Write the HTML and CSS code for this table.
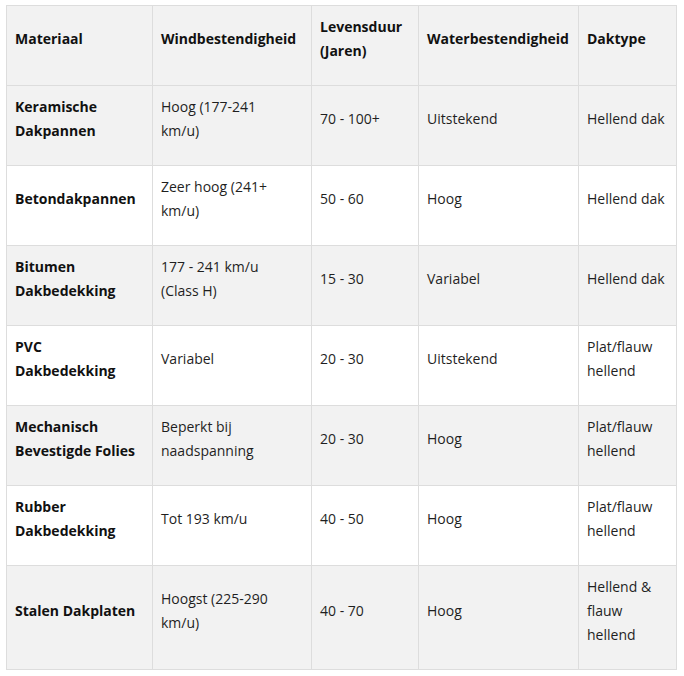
FILE: index.html
```html
<!DOCTYPE html>
<html lang="nl">
<head>
<meta charset="utf-8">
<title>Dakmaterialen</title>
<link rel="stylesheet" href="styles.css">
</head>
<body>
<div class="wrap">
<table class="cmp">
  <colgroup>
    <col class="c1"><col class="c2"><col class="c3"><col class="c4"><col class="c5">
  </colgroup>
  <thead>
    <tr>
      <th>Materiaal</th>
      <th>Windbestendigheid</th>
      <th>Levensduur<br>(Jaren)</th>
      <th>Waterbestendigheid</th>
      <th>Daktype</th>
    </tr>
  </thead>
  <tbody>
    <tr class="alt">
      <td class="name">Keramische<br>Dakpannen</td>
      <td>Hoog (177-241<br>km/u)</td>
      <td>70 - 100+</td>
      <td>Uitstekend</td>
      <td>Hellend dak</td>
    </tr>
    <tr>
      <td class="name">Betondakpannen</td>
      <td>Zeer hoog (241+<br>km/u)</td>
      <td>50 - 60</td>
      <td>Hoog</td>
      <td>Hellend dak</td>
    </tr>
    <tr class="alt">
      <td class="name">Bitumen<br>Dakbedekking</td>
      <td>177 - 241 km/u<br>(Class H)</td>
      <td>15 - 30</td>
      <td>Variabel</td>
      <td>Hellend dak</td>
    </tr>
    <tr>
      <td class="name">PVC<br>Dakbedekking</td>
      <td>Variabel</td>
      <td>20 - 30</td>
      <td>Uitstekend</td>
      <td>Plat/flauw<br>hellend</td>
    </tr>
    <tr class="alt">
      <td class="name">Mechanisch<br>Bevestigde Folies</td>
      <td>Beperkt bij<br>naadspanning</td>
      <td>20 - 30</td>
      <td>Hoog</td>
      <td>Plat/flauw<br>hellend</td>
    </tr>
    <tr>
      <td class="name">Rubber<br>Dakbedekking</td>
      <td>Tot 193 km/u</td>
      <td>40 - 50</td>
      <td>Hoog</td>
      <td>Plat/flauw<br>hellend</td>
    </tr>
    <tr class="alt">
      <td class="name">Stalen Dakplaten</td>
      <td>Hoogst (225-290<br>km/u)</td>
      <td>40 - 70</td>
      <td>Hoog</td>
      <td>Hellend &amp;<br>flauw<br>hellend</td>
    </tr>
  </tbody>
</table>
</div>
</body>
</html>
```
FILE: styles.css
```css
html, body {
  margin: 0;
  padding: 0;
  background: #ffffff;
}
.wrap {
  padding: 5px 6px;
}
.cmp {
  border-collapse: collapse;
  table-layout: fixed;
  width: 670px;
  font-family: "Open Sans", "Noto Sans", sans-serif;
  font-size: 14px;
  line-height: 24px;
  color: #1f1f1f;
}
.c1 { width: 146px; }
.c2 { width: 159px; }
.c3 { width: 107px; }
.c4 { width: 160px; }
.c5 { width: 98px; }
.cmp th,
.cmp td {
  border: 1px solid #dddddd;
  padding: 9px 8px 22px;
  vertical-align: middle;
  text-align: left;
  white-space: nowrap;
}
.cmp th {
  background: #f2f2f2;
  font-weight: 700;
  color: #111111;
}
.cmp td.name {
  font-weight: 700;
  color: #111111;
}
.cmp tr.alt td {
  background: #f2f2f2;
}
```
